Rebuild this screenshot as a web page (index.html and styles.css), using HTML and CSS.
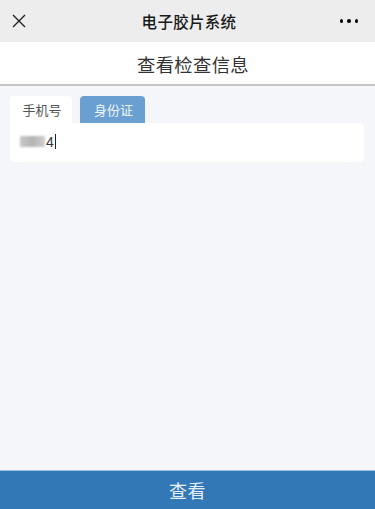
FILE: index.html
```html
<!DOCTYPE html>
<html lang="zh">
<head>
<meta charset="utf-8">
<meta name="viewport" content="width=device-width, initial-scale=1">
<title>电子胶片系统</title>
<link rel="stylesheet" href="styles.css">
</head>
<body>
<div class="page">
  <div class="topbar">
    <div class="close">
      <svg width="14" height="14" viewBox="0 0 14 14"><path d="M1 1L13 13M13 1L1 13" stroke="#222" stroke-width="1.4" fill="none"/></svg>
    </div>
    <div class="app-title">电子胶片系统</div>
    <div class="more"><span class="dot"></span><span class="dot"></span><span class="dot"></span></div>
  </div>
  <div class="header">查看检查信息</div>
  <div class="content">
    <div class="tabs">
      <div class="tab">手机号</div>
      <div class="tab active">身份证</div>
    </div>
    <div class="input-box">
      <span class="redact"></span><span class="digit">4</span><span class="cursor"></span>
    </div>
  </div>
  <div class="submit">查看</div>
</div>
</body>
</html>
```
FILE: styles.css
```css
html, body {
  margin: 0;
  padding: 0;
}
body {
  font-family: "Noto Sans CJK SC", "Noto Sans", sans-serif;
  background: #f5f6fa;
}
.page {
  width: 375px;
  height: 509px;
  display: flex;
  flex-direction: column;
  overflow: hidden;
}
.topbar {
  height: 42px;
  flex: none;
  background: #ededed;
  display: flex;
  align-items: center;
  justify-content: space-between;
  padding: 0 17px 0 12px;
}
.close {
  width: 14px;
  height: 14px;
  display: flex;
}
.app-title {
  font-size: 15.5px;
  font-weight: 500;
  color: #1a1a1a;
  margin-left: 12px;
  letter-spacing: 0.3px;
}
.more {
  display: flex;
  gap: 4px;
  width: 18px;
}
.dot {
  width: 3.5px;
  height: 3.5px;
  border-radius: 50%;
  background: #111;
}
.header {
  flex: none;
  background: #fff;
  border-bottom: 2px solid #c4c4c4;
  box-sizing: border-box;
  height: 44px;
  display: flex;
  align-items: center;
  justify-content: center;
  font-size: 18.3px;
  color: #333;
  letter-spacing: 0.4px;
  padding: 2px 0 0 11px;
}
.content {
  flex: 1;
  padding: 10px 11px 0 10px;
}
.tabs {
  display: flex;
  gap: 8px;
  height: 27px;
}
.tab {
  width: 62px;
  display: flex;
  align-items: center;
  justify-content: center;
  font-size: 13px;
  color: #555;
  background: #fff;
  border-radius: 4px 4px 0 0;
  padding-left: 2px;
  padding-bottom: 1px;
  box-sizing: border-box;
}
.tab.active {
  width: 65px;
  background: #6a9fd1;
  color: #f2f7fc;
}
.input-box {
  height: 39px;
  background: #fff;
  border-radius: 0 4px 4px 4px;
  display: flex;
  align-items: center;
  padding-left: 10px;
  padding-bottom: 2px;
  box-sizing: border-box;
}
.redact {
  width: 25px;
  height: 11px;
  background: linear-gradient(90deg, #c8c8c8, #b4b4b4 50%, #d0d0d0);
  filter: blur(1px);
  margin-right: 1px;
}
.digit {
  font-family: "Liberation Sans", sans-serif;
  font-size: 14px;
  color: #333;
  line-height: 1;
}
.cursor {
  width: 1px;
  height: 15px;
  background: #222;
  margin-left: 1px;
}
.submit {
  height: 38px;
  flex: none;
  background: #3378b6;
  border-top: 1px solid #9ec0de;
  display: flex;
  align-items: center;
  justify-content: center;
  font-size: 18px;
  color: #e6f0fa;
  letter-spacing: 0.5px;
}
```
